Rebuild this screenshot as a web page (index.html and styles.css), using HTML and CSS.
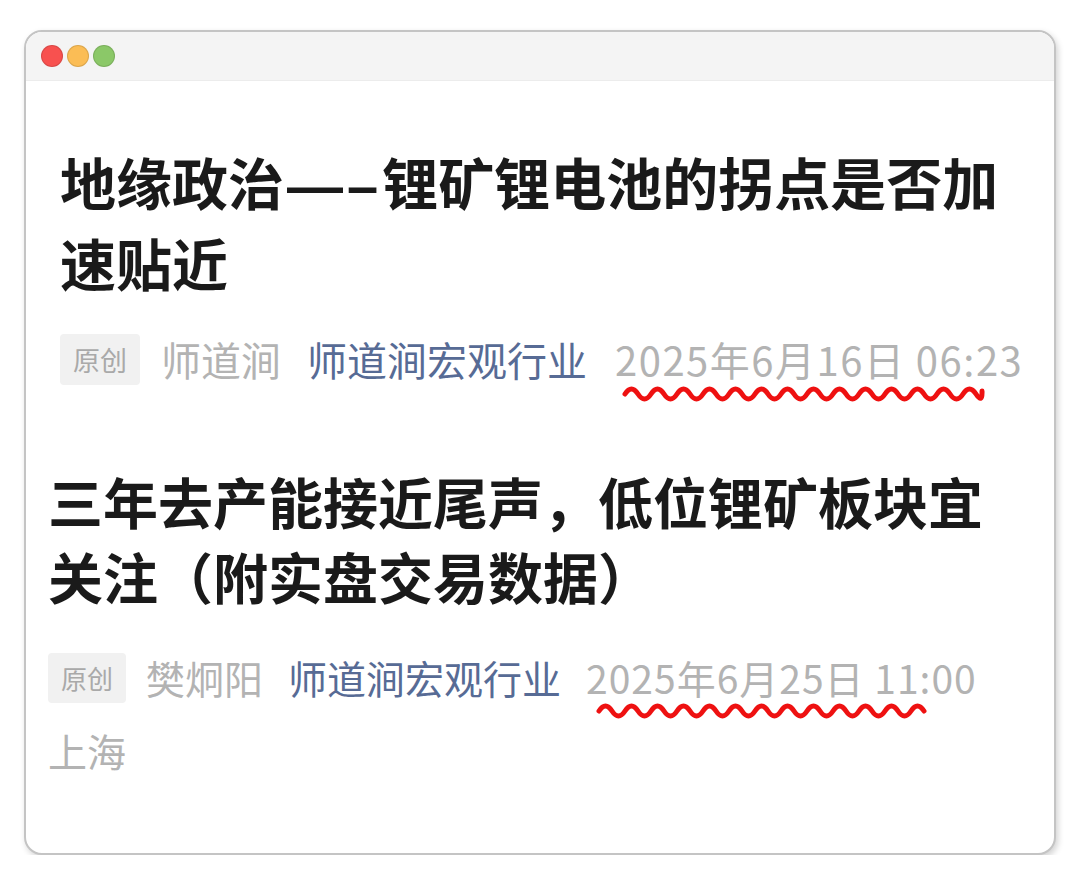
FILE: index.html
```html
<!DOCTYPE html>
<html lang="zh-CN">
<head>
    <meta charset="UTF-8">
    <meta name="viewport" content="width=device-width, initial-scale=1.0">
    <title>师道涧宏观行业</title>
    <link rel="stylesheet" href="styles.css">
</head>
<body>

    <div class="window">
        <div class="titlebar">
            <span class="dot red"></span>
            <span class="dot yellow"></span>
            <span class="dot green"></span>
        </div>

        <div class="content">
            <div class="article indented">
                <h1 class="title">地缘政治<span class="dash">—–</span>锂矿锂电池的拐点是否加速贴近</h1>
                <div class="meta">
                    <span class="tag">原创</span>
                    <span class="author">师道涧</span>
                    <span class="account">师道涧宏观行业</span>
                    <span class="date">2025年6月16日 06:23
                        <svg class="squiggle" width="375" height="20" viewBox="0 0 375 20">
                            <path d="M3,10 q6.5,-10 13,0 t13,0 t13,0 t13,0 t13,0 t13,0 t13,0 t13,0 t13,0 t13,0 t13,0 t13,0 t13,0 t13,0 t13,0 t13,0 t13,0 t13,0 t13,0 t13,0 t13,0 t13,0 t13,0 t13,0 t13,0 t13,0 t13,0 t6,-3"/>
                        </svg>
                    </span>
                </div>
            </div>

            <div class="article second">
                <h1 class="title">三年去产能接近尾声，低位锂矿板块宜关注（附实盘交易数据）</h1>
                <div class="meta">
                    <span class="tag">原创</span>
                    <span class="author">樊炯阳</span>
                    <span class="account">师道涧宏观行业</span>
                    <span class="date">2025年6月25日 11:00
                        <svg class="squiggle" width="340" height="20" viewBox="0 0 340 20">
                            <path d="M3,10 q6.5,-10 13,0 t13,0 t13,0 t13,0 t13,0 t13,0 t13,0 t13,0 t13,0 t13,0 t13,0 t13,0 t13,0 t13,0 t13,0 t13,0 t13,0 t13,0 t13,0 t13,0 t13,0 t13,0 t13,0 t13,0 t13,0"/>
                        </svg>
                    </span>
                    <span class="location">上海</span>
                </div>
            </div>
        </div>
    </div>

</body>
</html>
```

FILE: styles.css
```css
body {
    margin: 0;
    background: #ffffff;
    font-family: "Noto Sans CJK SC", "Noto Sans", sans-serif;
}

.window {
    margin: 30px 24px 0 24px;
    height: 821px;
    border: 2px solid #c4c4c4;
    border-radius: 18px;
    background: #ffffff;
    box-shadow: 2px 3px 6px rgba(0,0,0,0.18);
    overflow: hidden;
}

.titlebar {
    height: 48px;
    background: #f4f4f4;
    border-bottom: 1px solid #ececec;
    display: flex;
    align-items: center;
    gap: 4px;
    padding-left: 15px;
}

.dot {
    width: 20px;
    height: 20px;
    border-radius: 50%;
    border: 1px solid rgba(0,0,0,0.12);
}
.red { background: #f8514f; }
.yellow { background: #fbbd55; }
.green { background: #8bc868; }

.content {
    padding: 62px 18px 0 22px;
}

.article.indented {
    padding-left: 12px;
}

.title {
    margin: 0;
    font-size: 56px;
    line-height: 76px;
    font-weight: bold;
    color: #1a1a1a;
}

.dash {
    font-family: "Liberation Sans", sans-serif;
    letter-spacing: 4px;
    margin-left: 3px;
}

.meta {
    display: flex;
    flex-wrap: wrap;
    align-items: center;
    margin-top: 23px;
    font-size: 40px;
    line-height: 73px;
    color: #b3b3b3;
}

.meta span {
    white-space: nowrap;
}

.tag {
    display: inline-block;
    background: #f1f1f1;
    color: #a9a9a9;
    font-size: 27px;
    line-height: 51px;
    padding: 0 13px;
    border-radius: 4px;
}

.author {
    margin-left: 21px;
}

.account {
    color: #576b95;
    margin-left: 26px;
}

.date {
    position: relative;
    letter-spacing: 1.5px;
    margin-left: 28px;
}

.squiggle {
    position: absolute;
    left: 7px;
    top: 61px;
}

.squiggle path {
    fill: none;
    stroke: #ee1111;
    stroke-width: 5;
    stroke-linecap: round;
}

/* second article is a touch smaller in the screenshot */
.article.second {
    margin-top: 67px;
}

.article.second .title {
    font-size: 55px;
    line-height: 75px;
}

.article.second .meta {
    margin-top: 28px;
    font-size: 39px;
}

.article.second .tag {
    font-size: 26px;
    line-height: 50px;
}

.article.second .author {
    margin-left: 20px;
}

.article.second .account {
    margin-left: 25px;
}

.article.second .date {
    letter-spacing: 1px;
    margin-left: 25px;
}

.article.second .squiggle {
    left: 10px;
    top: 60px;
}
```
